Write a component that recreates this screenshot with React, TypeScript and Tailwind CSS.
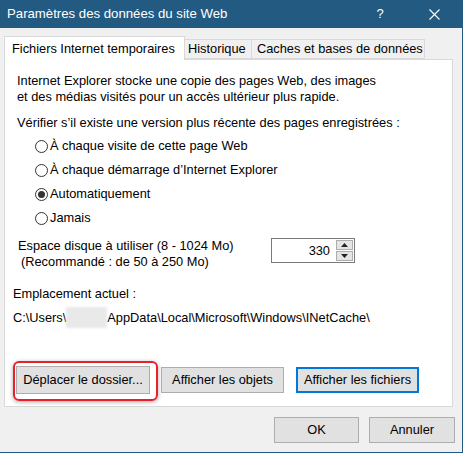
import React from 'react';

// Internet Explorer "Website Data Settings" dialog, temporary files tab
function Radio({ checked, label }: { checked?: boolean; label: string }) {
  return (
    <div className="flex items-center h-[16px]">
      <span className="w-[13px] h-[13px] rounded-full border border-[#333] bg-white flex items-center justify-center">
        {checked && <span className="w-[7px] h-[7px] rounded-full bg-[#333]" />}
      </span>
      <span className="ml-[2px]">{label}</span>
    </div>
  );
}

function Btn({ children, className = '' }: { children: React.ReactNode; className?: string }) {
  return (
    <div className={`h-[26px] flex items-center justify-center bg-[#e1e1e1] border border-[#adadad] whitespace-nowrap ${className}`}>
      {children}
    </div>
  );
}

export default function App() {
  return (
    <div className="w-[464px] h-[457px] bg-white overflow-hidden font-['Liberation_Sans',sans-serif] text-[12.8px] text-black leading-[16px]">
      <div className="w-[463px] h-[453px] bg-[#f0f0f0] border-r border-b border-[#235a81] flex flex-col">
        {/* title bar */}
        <div className="h-[28px] bg-[#235a81] text-white flex items-center pl-[7px] shrink-0">
          <span className="text-[13.2px]">Paramètres des données du site Web</span>
          <span className="ml-auto w-[12px] text-center text-[13px]">?</span>
          <svg className="ml-[43px] mr-[22px]" width="11" height="11" viewBox="0 0 11 11">
            <path d="M0.5 0.5 L10.5 10.5 M10.5 0.5 L0.5 10.5" stroke="white" strokeWidth="1.1" />
          </svg>
        </div>

        <div className="pl-[4px] pr-[9px] flex flex-col flex-1">
          {/* tabs */}
          <div className="flex items-end h-[32px] pt-[9px] relative z-10 whitespace-nowrap">
            <div className="h-[24px] w-[181px] bg-white border border-b-0 border-[#d9d9d9] flex items-center pl-[7px]">
              Fichiers Internet temporaires
            </div>
            <div className="h-[20px] w-[67px] bg-[#f0f0f0] border border-l-0 border-[#d9d9d9] flex items-center pl-[3px] mb-[1px]">
              Historique
            </div>
            <div className="h-[20px] w-[173px] bg-[#f0f0f0] border border-l-0 border-[#d9d9d9] flex items-center pl-[5px] mb-[1px]">
              Caches et bases de données
            </div>
          </div>

          {/* tab panel */}
          <div className="-mt-[1px] h-[348px] bg-white border border-[#d9d9d9] pl-[12px] pt-[13px] flex flex-col">
            <p>
              Internet Explorer stocke une copie des pages Web, des images
              <br />
              et des médias visités pour un accès ultérieur plus rapide.
            </p>
            <p className="mt-[10px]">Vérifier s’il existe une version plus récente des pages enregistrées :</p>
            <div className="mt-[7px] ml-[18px] flex flex-col gap-[8px]">
              <Radio label="À chaque visite de cette page Web" />
              <Radio label="À chaque démarrage d’Internet Explorer" />
              <Radio checked label="Automatiquement" />
              <Radio label="Jamais" />
            </div>

            <div className="mt-[12px] flex items-start">
              <div className="ml-[1px]">
                <div>Espace disque à utiliser (8 - 1024 Mo)</div>
                <div className="pl-[3px]">(Recommandé : de 50 à 250 Mo)</div>
              </div>
              <div className="ml-auto mr-[97px] w-[84px] h-[25px] border border-[#7a7a7a] flex items-center">
                <span className="flex-1 text-right pr-[5px]">330</span>
                <div className="w-[19px] h-full flex flex-col p-[1px] gap-[1px]">
                  <div className="flex-1 bg-[#e5e5e5] border border-[#adadad] flex items-center justify-center">
                    <svg width="7" height="4" viewBox="0 0 7 4"><path d="M0 4 L3.5 0 L7 4 Z" fill="#222" /></svg>
                  </div>
                  <div className="flex-1 bg-[#e5e5e5] border border-[#adadad] flex items-center justify-center">
                    <svg width="7" height="4" viewBox="0 0 7 4"><path d="M0 0 L3.5 4 L7 0 Z" fill="#222" /></svg>
                  </div>
                </div>
              </div>
            </div>

            <div className="mt-[16px] -ml-[4px]">Emplacement actuel :</div>
            <div className="mt-[5px] -ml-[4px] flex items-center">
              <span>C:\Users\</span>
              <span className="inline-block w-[41px] h-[21px] bg-[#e9e9e9] blur-[1px]" />
              <span>AppData\Local\Microsoft\Windows\INetCache\</span>
            </div>

            <div className="mt-[33px] -ml-[4px] flex items-start">
              <div className="w-[145px] h-[40px] rounded-[6px] border-2 border-[#e8202a] shadow-[0_1px_4px_rgba(0,0,0,0.35)] pl-[1px] pt-[3px]">
                <Btn className="w-[134px] h-[28px]">Déplacer le dossier...</Btn>
              </div>
              <Btn className="ml-[3px] mt-[6px] w-[123px]">Afficher les objets</Btn>
              <div className="ml-[12px] mt-[6px] w-[123px] h-[26px] flex items-center justify-center bg-[#e1e1e1] border-2 border-[#0078d7] whitespace-nowrap">
                Afficher les fichiers
              </div>
            </div>
          </div>

          {/* dialog buttons */}
          <div className="mt-[10px] flex justify-end gap-[10px]">
            <Btn className="w-[85px]">OK</Btn>
            <Btn className="w-[86px] -mr-[2px]">Annuler</Btn>
          </div>
        </div>
      </div>
    </div>
  );
}
